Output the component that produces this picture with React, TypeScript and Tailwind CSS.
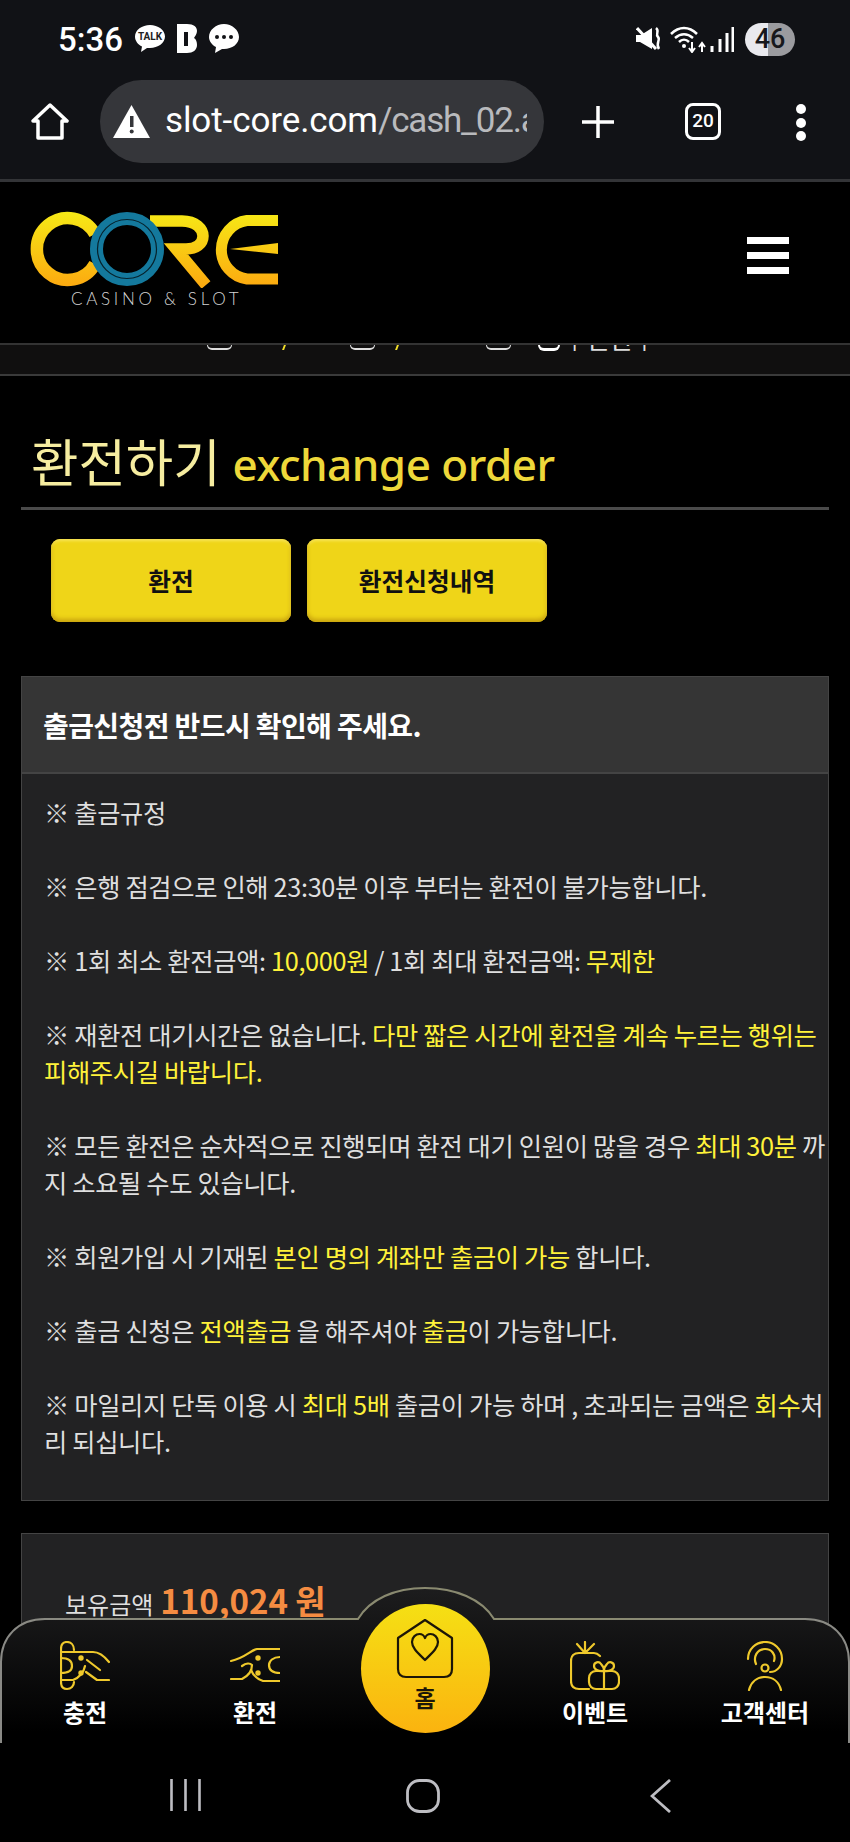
import React from "react";

const Y = "text-[#fff23a]";

function Status() {
  return (
    <div className="flex h-[80px] items-center justify-between pl-[58px] pr-[55px] pb-[2px]">
      <div className="flex items-center">
        <span className="font-['Roboto',sans-serif] text-[33px] font-medium leading-none text-white w-[77px]">5:36</span>
        <svg width="104" height="30" viewBox="0 0 104 30">
          <path d="M15 1C7 1 0 6 0 12.500C0 17 3 20.500 7 22.500L6 28L12 24C13 24 14 24 15 24C23 24 30 19 30 12.500C30 6 23 1 15 1Z" fill="#fff" />
          <text x="15" y="16" textAnchor="middle" fontSize="10" fontWeight="700" fill="#222" fontFamily="Roboto">TALK</text>
          <path d="M42 0H52C59 0 62 3 62 7C62 10 60 12 59 14C61 15 62 18 62 21C62 26 58 29 52 29H42Z" fill="#fff" />
          <rect x="49" y="8" width="4" height="14" fill="#111216" />
          <path d="M89 0C81 0 74 6 74 13C74 17 77 21 81 23L80 29L87 25H89C97 25 104 20 104 13C104 6 97 0 89 0Z" fill="#fff" />
          <circle cx="82" cy="13" r="2" fill="#111216" />
          <circle cx="89" cy="13" r="2" fill="#111216" />
          <circle cx="96" cy="13" r="2" fill="#111216" />
        </svg>
      </div>
      <div className="flex items-center">
        <svg width="98" height="28" viewBox="0 0 98 28" className="mr-[11px]">
          <path d="M1 3L20 24" stroke="#fff" strokeWidth="3" />
          <path d="M0 10H5L16 3V24L4 17H0Z" fill="#fff" />
          <path d="M20 3C24 6 19 9 22 12C25 15 19 18 23 24" stroke="#fff" strokeWidth="2.500" fill="none" />
          <path d="M35 9C43 1 53 1 61 9M39 13C45 8 51 8 57 13M43 17C46 14 50 14 53 17" stroke="#fff" strokeWidth="2.500" fill="none" />
          <circle cx="48" cy="21" r="2" fill="#fff" />
          <path d="M56 17V26M53 23L56 27L59 23M66 27V19M63 22L66 18L69 22" stroke="#fff" strokeWidth="2" fill="none" />
          <path d="M76 21V27M84 14V27M91 8V27M97 2V27" stroke="#fff" strokeWidth="3" fill="none" />
        </svg>
        <div className="flex h-[33px] w-[50px] items-center justify-center rounded-full bg-[linear-gradient(90deg,#e9e9ee_46%,#9b9b9f_46%)] font-['Roboto',sans-serif] text-[27px] font-medium text-[#17181c]">
          46
        </div>
      </div>
    </div>
  );
}

function Chrome() {
  return (
    <div className="flex h-[102px] items-start pl-[31px] border-b-[3px] border-[#333437]">
      <svg width="38" height="38" viewBox="0 0 38 38" className="mt-[23px]">
        <path d="M19 2L36 18H31V35H7V18H2Z" fill="none" stroke="#fff" strokeWidth="3.500" strokeLinejoin="round" />
      </svg>
      <div className="ml-[31px] flex h-[83px] w-[444px] items-center overflow-hidden rounded-full bg-[#35363a] pl-[13px]">
        <svg width="37" height="33" viewBox="0 0 37 33" className="shrink-0">
          <path d="M18.500 0L37 33H0Z" fill="#fff" />
          <rect x="17" y="11" width="3.500" height="11" fill="#35363a" />
          <circle cx="18.700" cy="26.500" r="2" fill="#35363a" />
        </svg>
        <div className="ml-[15px] w-[362px] overflow-hidden whitespace-nowrap font-['Roboto',sans-serif] text-[35px] tracking-[-0.100px] text-[#b9babd]">
          <span className="text-white">slot-core.com</span>
          <span className="tracking-[-1.200px]">/cash_02.asp</span>
        </div>
      </div>
      <svg width="34" height="34" viewBox="0 0 34 34" className="ml-[37px] mt-[25px]">
        <path d="M17 1V33M1 17H33" stroke="#fff" strokeWidth="3.500" />
      </svg>
      <div className="ml-[70px] mt-[23px] flex h-[37px] w-[36px] items-center justify-center rounded-[8px] border-[3.500px] border-white font-['Roboto',sans-serif] text-[19px] font-medium text-white">
        20
      </div>
      <div className="ml-[75px] mt-[24px] flex flex-col gap-[3.500px]">
        <div className="h-[10px] w-[10px] rounded-full bg-white" />
        <div className="h-[10px] w-[10px] rounded-full bg-white" />
        <div className="h-[10px] w-[10px] rounded-full bg-white" />
      </div>
    </div>
  );
}

function Logo() {
  return (
    <div className="flex flex-col">
      <svg width="260" height="80" viewBox="25 208 260 80">
        <defs>
          <linearGradient id="lg" gradientUnits="userSpaceOnUse" x1="0" y1="212" x2="0" y2="286">
            <stop offset="0" stopColor="#f6e916" />
            <stop offset="1" stopColor="#fcaa10" />
          </linearGradient>
        </defs>
        <path d="M95 234A31 31 0 1 0 95 264" fill="none" stroke="url(#lg)" strokeWidth="12.500" />
        <path d="M150 221H182C196 221 203 229 203 236C203 244 196 249 186 249H176L206 285" fill="none" stroke="url(#lg)" strokeWidth="11.500" />
        <path d="M278 220.500H247A29.500 29.500 0 0 0 247 279H278" fill="none" stroke="url(#lg)" strokeWidth="11" />
        <path d="M230 249L278 243V254Z" fill="url(#lg)" />
        <circle cx="127" cy="249" r="30.500" fill="none" stroke="#14799d" strokeWidth="13" />
        <circle cx="127" cy="249" r="29.500" fill="none" stroke="#06222c" strokeWidth="1.200" />
      </svg>
      <div className="ml-[46px] mt-[2px] whitespace-nowrap font-['Lato',sans-serif] text-[17px] font-light leading-[18px] tracking-[3.700px] text-[#d4d4d4]">
        CASINO &amp; SLOT
      </div>
    </div>
  );
}

function Header() {
  return (
    <div className="flex h-[161px] items-start justify-between bg-black pl-[25px] pr-[61px] pt-[26px]">
      <Logo />
      <div className="mt-[29px] flex w-[42px] flex-col gap-[8px]">
        <div className="h-[7px] bg-white" />
        <div className="h-[7px] bg-white" />
        <div className="h-[7px] bg-white" />
      </div>
    </div>
  );
}

function ClippedRow() {
  const cup = "h-[5px] w-[25px] rounded-b-[5px] border-x border-b-2 border-[#ddd]";
  const slash = "h-[5px] w-[2px] skew-x-[-20deg] bg-[#f2df2a]";
  return (
    <div className="flex h-[33px] items-start border-y-2 border-y-[#333] border-b-[#3a3a3a] bg-[#100f0f] pl-[207px]">
      <div className={cup} />
      <div className={`${slash} ml-[51px]`} />
      <div className={`${cup} ml-[65px]`} />
      <div className={`${slash} ml-[21px]`} />
      <div className={`${cup} ml-[88px]`} />
      <div className="ml-[27px] h-[6px] w-[22px] rounded-b-full border-x-[2px] border-b-[3px] border-white" />
      <div className="ml-[11px] flex h-[6px] items-end overflow-hidden">
        <span className="whitespace-nowrap text-[26px] leading-[26px] text-[#ddd]">[ 전환 ]</span>
      </div>
    </div>
  );
}

function Notice() {
  return (
    <div className="mt-[54px] border border-[#444] bg-[#222223]">
      <div className="flex h-[97px] items-center border-b-2 border-[#444] bg-[#353535] pl-[21px] text-[28px] font-bold tracking-[-0.600px] text-white">
        출금신청전 반드시 확인해 주세요.
      </div>
      <div className="flex flex-col gap-[37px] pl-[22px] pb-[40px] pt-[20px] text-[25.300px] leading-[37px] tracking-[-0.350px] text-[#dfdfdf]">
        <p>※ 출금규정</p>
        <p>※ 은행 점검으로 인해 23:30분 이후 부터는 환전이 불가능합니다.</p>
        <p>
          ※ 1회 최소 환전금액: <span className={Y}>10,000원</span> / 1회 최대 환전금액: <span className={Y}>무제한</span>
        </p>
        <p>
          ※ 재환전 대기시간은 없습니다. <span className={Y}>다만 짧은 시간에 환전을 계속 누르는 행위는 피해주시길 바랍니다.</span>
        </p>
        <p>
          ※ 모든 환전은 순차적으로 진행되며 환전 대기 인원이 많을 경우 <span className={Y}>최대 30분</span> 까지 소요될 수도 있습니다.
        </p>
        <p>
          ※ 회원가입 시 기재된 <span className={Y}>본인 명의 계좌만 출금이 가능</span> 합니다.
        </p>
        <p>
          ※ 출금 신청은 <span className={Y}>전액출금</span> 을 해주셔야 <span className={Y}>출금</span>이 가능합니다.
        </p>
        <p>
          ※ 마일리지 단독 이용 시 <span className={Y}>최대 5배</span> 출금이 가능 하며 , 초과되는 금액은 <span className={Y}>회수</span>처리 되십니다.
        </p>
      </div>
    </div>
  );
}

const ic = { fill: "none", stroke: "#efc92c", strokeWidth: 2.2, strokeLinecap: "round" as const, strokeLinejoin: "round" as const };

function IconCharge() {
  return (
    <svg width="50" height="50" viewBox="0 0 50 50" {...ic}>
      <path d="M14 9C14 4 11 1 7 1C3 1 1 4 1 8V41C1 45 3 48 7 48C11 48 14 45 14 41" />
      <path d="M1 11H33C39 11 45 16 49 21" />
      <path d="M1 39H13C19 37 24 31 25 25" />
      <path d="M26 31L37 39H49" />
      <path d="M27 19L40 29" />
      <path d="M1 17C8 17 12 20 12 25C12 30 8 32 1 32" />
      <circle cx="21" cy="17" r="1.600" fill="#efc92c" />
      <circle cx="21" cy="32" r="1.600" fill="#efc92c" />
    </svg>
  );
}

function IconExchange() {
  return (
    <svg width="50" height="50" viewBox="0 0 50 50" {...ic}>
      <path d="M50 8H27C21 9 15 17 1 20" />
      <path d="M50 40H33C27 38 23 34 21 29" />
      <path d="M1 38H12C18 35 22 30 22 24C20 22 16 22 12 25" />
      <path d="M50 16C43 16 39 20 39 24C39 29 43 32 50 32" />
      <circle cx="28" cy="17" r="1.600" fill="#efc92c" />
      <circle cx="28" cy="32" r="1.600" fill="#efc92c" />
    </svg>
  );
}

function IconGift() {
  return (
    <svg width="50" height="50" viewBox="0 0 50 50" {...ic}>
      <path d="M30 15C28 13 26 12 24 12H9C4 12 1 15 1 20V40C1 45 4 48 9 48H19" />
      <rect x="19" y="30" width="30" height="18" rx="7" />
      <path d="M34 30V48" />
      <path d="M34 30C28 31 24 28 24 25C24 21 29 20 31 23C33 25 34 28 34 30C34 28 35 25 37 23C39 20 44 21 44 25C44 28 40 31 34 30Z" />
      <path d="M15 12L7 3M15 12V1M15 12L24 3" />
    </svg>
  );
}

function IconSupport() {
  return (
    <svg width="50" height="50" viewBox="0 0 50 50" {...ic}>
      <path d="M8 18C8 8 16 1 25 1C34 1 42 8 42 18C42 25 37 31 30 31" />
      <path d="M16 23C13 16 17 8 25 8C32 8 36 14 34 20" />
      <circle cx="25" cy="27" r="3.500" />
      <path d="M9 49C11 41 17 36 25 36C33 36 39 41 41 49" />
    </svg>
  );
}

function NavItem({ label, children }: { label: string; children: React.ReactNode }) {
  return (
    <div className="flex flex-1 flex-col items-center">
      {children}
      <div className="mt-[5px] whitespace-nowrap text-[24px] font-bold leading-[32px] text-white">{label}</div>
    </div>
  );
}

function BottomNav() {
  return (
    <div className="absolute inset-x-0 bottom-[99px] h-[156px]">
      <svg width="850" height="156" viewBox="0 0 850 156" className="absolute inset-0">
        <defs>
          <linearGradient id="nv" x1="0" y1="0" x2="0" y2="1">
            <stop offset="0" stopColor="#1d1d1e" />
            <stop offset="0.85" stopColor="#000" />
          </linearGradient>
          <linearGradient id="nb" x1="0" y1="0" x2="1" y2="0">
            <stop offset="0" stopColor="#8a8a86" />
            <stop offset="0.3" stopColor="#8a8a70" />
            <stop offset="0.7" stopColor="#8a8a70" />
            <stop offset="1" stopColor="#8a8a86" />
          </linearGradient>
        </defs>
        <path
          d="M1 170V75C1 50 18 32 45 32H358C370 12 395 1 425 1C455 1 482 12 494 32H805C832 32 849 50 849 75V170Z"
          fill="url(#nv)"
          stroke="url(#nb)"
          strokeWidth="2"
        />
      </svg>
      <div className="relative flex h-full pt-[54px]">
        <NavItem label="충전"><IconCharge /></NavItem>
        <NavItem label="환전"><IconExchange /></NavItem>
        <div className="flex flex-1 justify-center">
          <div className="-mt-[37px] flex h-[129px] w-[129px] shrink-0 flex-col items-center rounded-full bg-[linear-gradient(180deg,#f5e014,#fbb30f)] pt-[15px]">
            <svg width="58" height="60" viewBox="0 0 58 60" fill="none" stroke="#1c1608" strokeWidth="2.200" strokeLinejoin="round">
              <path d="M29 1L56 19V50C56 55 53 58 48 58H10C5 58 2 55 2 50V19Z" />
              <path d="M29 41C22 34 16 29 16 23C16 18 20 15 23.500 15C26 15 28 16.500 29 19C30 16.500 32 15 34.500 15C38 15 42 18 42 23C42 29 36 34 29 41Z" />
            </svg>
            <div className="mt-[4px] text-[23px] font-bold leading-[28px] text-[#1c1608]">홈</div>
          </div>
        </div>
        <NavItem label="이벤트"><IconGift /></NavItem>
        <NavItem label="고객센터"><IconSupport /></NavItem>
      </div>
    </div>
  );
}

function SystemBar() {
  return (
    <div className="absolute inset-x-0 bottom-0 flex h-[99px] items-start justify-between bg-black pl-[170px] pr-[178px] pt-[36px]">
      <svg width="32" height="32" viewBox="0 0 32 32">
        <path d="M1.500 0V32M15.500 0V32M29.500 0V32" stroke="#bdbdc2" strokeWidth="2.600" />
      </svg>
      <svg width="34" height="34" viewBox="0 0 34 34" className="-ml-[6px]">
        <rect x="1.500" y="1.500" width="31" height="31" rx="12" fill="none" stroke="#bdbdc2" strokeWidth="2.800" />
      </svg>
      <svg width="22" height="34" viewBox="0 0 22 34">
        <path d="M20 1L2 17L20 33" fill="none" stroke="#bdbdc2" strokeWidth="2.800" />
      </svg>
    </div>
  );
}

export default function App() {
  return (
    <div className="relative flex h-[1842px] w-[850px] flex-col overflow-hidden bg-black font-['Noto_Sans_CJK_KR',sans-serif]">
      <div className="bg-[#111216]">
        <Status />
        <Chrome />
      </div>
      <Header />
      <ClippedRow />
      <div className="px-[21px]">
        <div className="flex h-[134px] items-end gap-[12px] border-b-[3px] border-[#4a4a4a] pb-[12px] pl-[10px]">
          <span className="text-[51.500px] leading-[70px] text-[#f6eda0]">환전하기</span>
          <span className="pb-[1px] font-['Noto_Sans',sans-serif] text-[44px] font-medium leading-[60px] tracking-[-0.500px] text-[#eed83a]">exchange order</span>
        </div>
        <div className="mt-[29px] flex gap-[16px] pl-[30px]">
          <div className="flex h-[83px] w-[240px] items-center justify-center rounded-[9px] bg-[#efd518] text-[24.700px] font-bold text-[#111] shadow-[inset_0_-3px_4px_#c9a40f,inset_0_2px_3px_#f8e65a]">환전</div>
          <div className="flex h-[83px] w-[240px] items-center justify-center rounded-[9px] bg-[#efd518] text-[24.700px] font-bold text-[#111] shadow-[inset_0_-3px_4px_#c9a40f,inset_0_2px_3px_#f8e65a]">환전신청내역</div>
        </div>
        <Notice />
        <div className="mt-[32px] h-[200px] border border-[#444] bg-[#222223] pl-[43px] pt-[42px]">
          <div className="flex items-baseline gap-[7px]">
            <span className="text-[24px] text-[#dfdfdf]">보유금액</span>
            <span className="text-[33px] font-bold text-[#f58c42]">110,024 원</span>
          </div>
        </div>
      </div>
      <BottomNav />
      <SystemBar />
    </div>
  );
}
